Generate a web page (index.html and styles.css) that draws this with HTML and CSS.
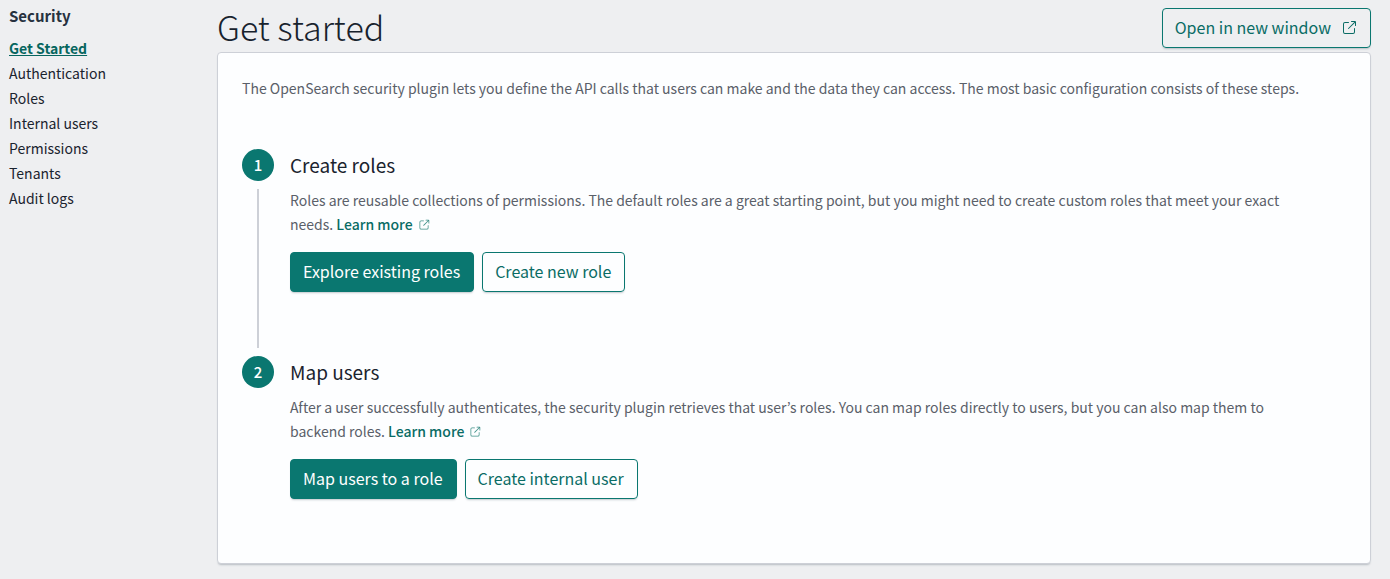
FILE: index.html
```html
<!DOCTYPE html>
<html lang="en">
<head>
<meta charset="utf-8">
<meta name="viewport" content="width=device-width, initial-scale=1">
<title>Security - Get started</title>
<link rel="stylesheet" href="styles.css">
</head>
<body>
<svg class="sprite" width="0" height="0" aria-hidden="true">
  <symbol id="popout" viewBox="0 0 16 16">
    <path d="M13 8.5a.5.5 0 1 1 1 0V12a2 2 0 0 1-2 2H4a2 2 0 0 1-2-2V4a2 2 0 0 1 2-2h3.500a.5.5 0 0 1 0 1H4a1 1 0 0 0-1 1v8a1 1 0 0 0 1 1h8a1 1 0 0 0 1-1V8.500Zm-5.120.339a.5.5 0 1 1-.706-.707L13.305 2H10.500a.5.5 0 1 1 0-1H14a1 1 0 0 1 1 1v3.500a.5.5 0 1 1-1 0V2.720L7.880 8.838Z"/>
  </symbol>
</svg>
<div class="page">
  <nav class="side-nav" aria-label="Security">
    <h2 class="side-nav-title">Security</h2>
    <ul class="side-nav-list">
      <li><a class="side-nav-link selected" href="#get-started" aria-current="page">Get Started</a></li>
      <li><a class="side-nav-link" href="#auth">Authentication</a></li>
      <li><a class="side-nav-link" href="#roles">Roles</a></li>
      <li><a class="side-nav-link" href="#users">Internal users</a></li>
      <li><a class="side-nav-link" href="#permissions">Permissions</a></li>
      <li><a class="side-nav-link" href="#tenants">Tenants</a></li>
      <li><a class="side-nav-link" href="#audit">Audit logs</a></li>
    </ul>
  </nav>
  <main class="content">
    <header class="content-header">
      <h1 class="title">Get started</h1>
      <button class="button" type="button">Open in new window<svg class="button-icon" aria-hidden="true"><use href="#popout"/></svg></button>
    </header>
    <section class="panel">
      <p class="text">The OpenSearch security plugin lets you define the API calls that users can make and the data they can access. The most basic configuration consists of these steps.</p>
      <ol class="steps">
        <li class="step">
          <div class="step-marker"><span class="step-number">1</span><span class="step-line"></span></div>
          <div class="step-body">
            <h2 class="step-title">Create roles</h2>
            <p class="text">Roles are reusable collections of permissions. The default roles are a great starting point, but you might need to create custom roles that meet your exact needs. <a class="link" href="#learn-roles">Learn more<svg class="link-icon" aria-hidden="true"><use href="#popout"/></svg></a></p>
            <div class="actions">
              <button class="button fill" type="button">Explore existing roles</button>
              <button class="button" type="button">Create new role</button>
            </div>
          </div>
        </li>
        <li class="step">
          <div class="step-marker"><span class="step-number">2</span></div>
          <div class="step-body">
            <h2 class="step-title">Map users</h2>
            <p class="text">After a user successfully authenticates, the security plugin retrieves that user’s roles. You can map roles directly to users, but you can also map them to backend roles. <a class="link" href="#learn-users">Learn more<svg class="link-icon" aria-hidden="true"><use href="#popout"/></svg></a></p>
            <div class="actions">
              <button class="button fill" type="button">Map users to a role</button>
              <button class="button" type="button">Create internal user</button>
            </div>
          </div>
        </li>
      </ol>
    </section>
  </main>
</div>
</body>
</html>
```
FILE: styles.css
```css
* {
  box-sizing: border-box;
}

body {
  margin: 0;
  background: #eeeff1;
  color: #1a1c21;
  font-family: "Noto Sans CJK JP", "Noto Sans", sans-serif;
  font-size: 14px;
  line-height: 24px;
}

h1, h2, p, ul, ol {
  margin: 0;
  padding: 0;
}

ul, ol {
  list-style: none;
}

.sprite {
  position: absolute;
}

.page {
  display: flex;
  gap: 16px;
  padding: 4px 19px 15px 9px;
}

.side-nav {
  flex: 0 0 192px;
}

.side-nav-title {
  margin-bottom: 8px;
  color: #26313f;
  font-size: 15px;
  font-weight: 600;
}

.side-nav-link {
  display: block;
  width: fit-content;
  color: #1a232e;
  line-height: 25px;
  text-decoration: none;
}

.side-nav-link.selected {
  color: #07665f;
  font-weight: 700;
  text-decoration: underline;
}

.content {
  flex: 1;
  min-width: 0;
}

.content-header {
  display: flex;
  justify-content: space-between;
  align-items: flex-start;
  padding: 4px 0;
}

.title {
  color: #17222d;
  font-size: 34px;
  font-weight: 300;
  line-height: 38px;
}

.button {
  display: inline-flex;
  align-items: center;
  gap: 10px;
  height: 40px;
  padding: 0 13px 2px 12px;
  border: 1px solid #0a7770;
  border-radius: 4px;
  background: transparent;
  box-shadow: 0 2px 2px -1px rgba(60, 75, 90, 0.3);
  color: #0a6c65;
  font: inherit;
  font-size: 16px;
  cursor: pointer;
}

.button.fill {
  background: #0a7770;
  color: #fff;
}

.button-icon {
  width: 16px;
  height: 16px;
  margin-top: 2px;
  fill: currentColor;
}

.panel {
  min-height: 512px;
  padding: 23px 24px 24px;
  border: 1px solid #cdd0d7;
  border-radius: 4px;
  background: #fdfeff;
  box-shadow: 0 2px 2px -1px rgba(60, 75, 90, 0.3);
}

.text {
  color: #5a6069;
}

.steps {
  margin-top: 49px;
}

.step {
  display: flex;
  gap: 16px;
  min-height: 207px;
}

.step:last-child {
  min-height: 0;
}

.step-marker {
  display: flex;
  flex: 0 0 32px;
  flex-direction: column;
  align-items: center;
  gap: 8px;
  padding-bottom: 8px;
}

.step-number {
  width: 32px;
  height: 32px;
  border-radius: 50%;
  background: #0a7770;
  color: #fff;
  font-weight: 500;
  font-size: 15px;
  line-height: 32px;
  text-align: center;
}

.step-line {
  flex: 1;
  width: 2px;
  background: #cdd0d7;
}

.step-body {
  flex: 1;
  min-width: 0;
  padding-right: 48px;
}

.step-title {
  margin-bottom: 7px;
  color: #1a232e;
  font-size: 19px;
  font-weight: 400;
  line-height: 32px;
}

.link {
  display: inline-block;
  color: #0a6c65;
  font-weight: 500;
  text-decoration: none;
}

.link-icon {
  width: 12px;
  height: 12px;
  margin-left: 5px;
  fill: #3f9088;
  vertical-align: -1px;
}

.actions {
  display: flex;
  flex-wrap: wrap;
  gap: 8px;
  margin-top: 16px;
}
```
